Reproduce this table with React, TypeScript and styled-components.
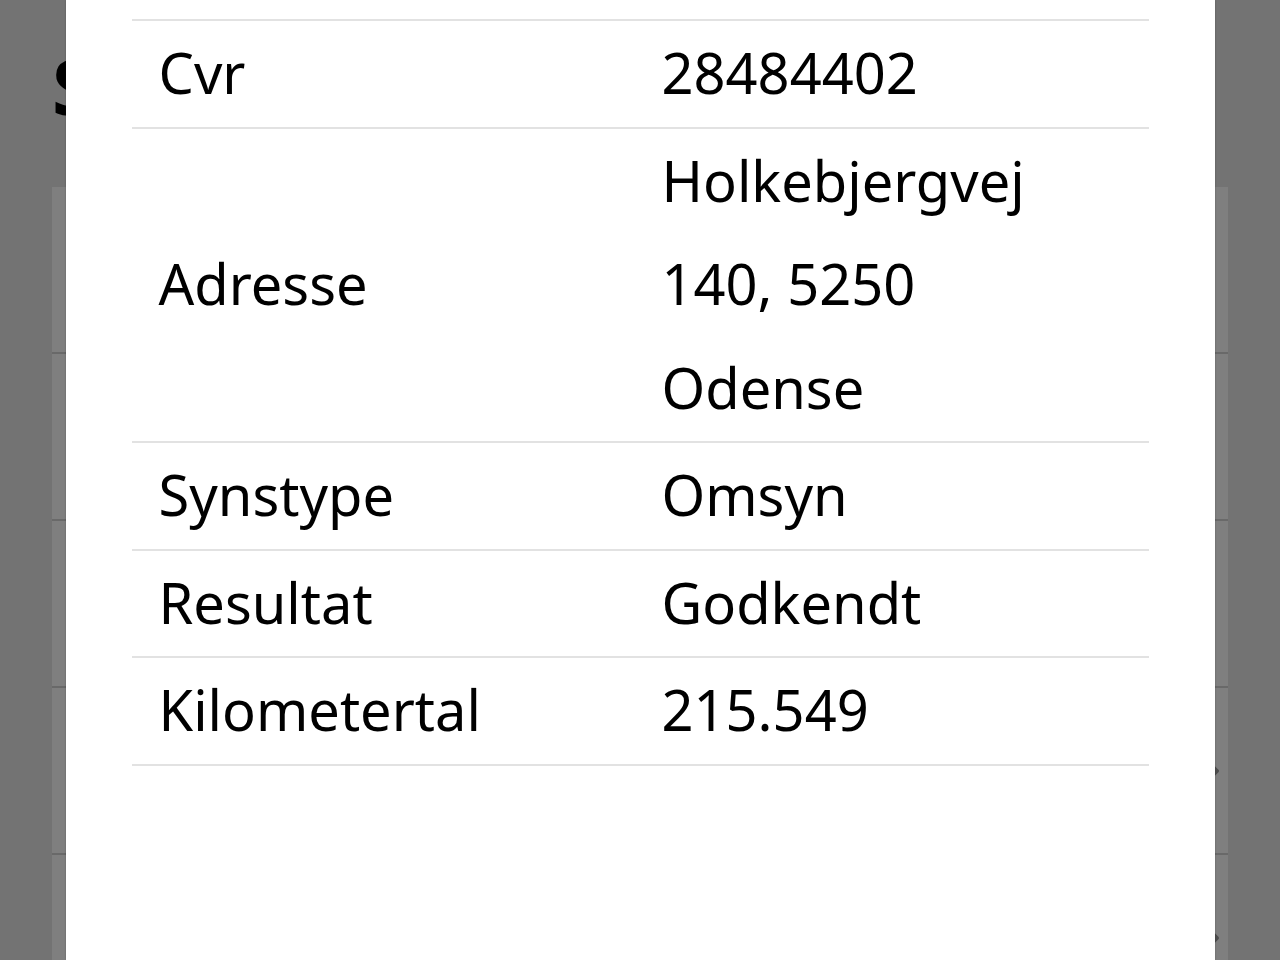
import React from 'react';
import styled, { createGlobalStyle } from 'styled-components';

type Detail = { label: string; value: string };

const details: Array<Detail> = [
  { label: 'Cvr', value: '28484402' },
  { label: 'Adresse', value: 'Holkebjergvej 140, 5250 Odense' },
  { label: 'Synstype', value: 'Omsyn' },
  { label: 'Resultat', value: 'Godkendt' },
  { label: 'Kilometertal', value: '215.549' },
];

const GlobalStyle = createGlobalStyle`
  html, body {
    margin: 0;
    height: 100%;
    overflow: hidden;
  }
  body {
    background: #e6e6e6;
    font-family: 'Noto Sans', 'Open Sans', sans-serif;
    color: #000;
  }
`;

export default function App() {
  return (
    <>
      <GlobalStyle />
      <Page>
        <Header>
          <Title>Syn</Title>
        </Header>
        <List>
          {[0, 1, 2, 3, 4].map((i) => (
            <ListItem key={i}>
              {i > 2 && (
                <Chevron viewBox="0 0 24 24">
                  <path d="M9 5l7 7-7 7" />
                </Chevron>
              )}
            </ListItem>
          ))}
        </List>
      </Page>
      <Overlay>
        <Modal>
          <Table>
            {details.map((d) => (
              <Row key={d.label}>
                <Label>{d.label}</Label>
                <Value>{d.value}</Value>
              </Row>
            ))}
          </Table>
        </Modal>
      </Overlay>
    </>
  );
}

const Page = styled('div')`
  padding: 0 52px;
`;

const Header = styled('header')`
  height: 187px;
  box-sizing: border-box;
  padding-top: 42px;
`;

const Title = styled('h1')`
  margin: 0;
  font-size: 77px;
  font-weight: 700;
  line-height: 88px;
`;

const List = styled('div')`
  background: #fff;
  display: flex;
  flex-direction: column;
`;

const ListItem = styled('div')`
  height: 165px;
  border-bottom: 2px solid #d2d2d2;
  display: flex;
  align-items: center;
  justify-content: flex-end;
  padding-right: 2px;
`;

const Chevron = styled('svg')`
  width: 26px;
  height: 26px;
  fill: none;
  stroke: #999;
  stroke-width: 3;
  stroke-linecap: round;
  stroke-linejoin: round;
`;

const Overlay = styled('div')`
  position: fixed;
  inset: 0;
  background: rgba(0, 0, 0, 0.5);
  display: flex;
  justify-content: center;
`;

const Modal = styled('div')`
  width: 1149px;
  height: 100%;
  box-sizing: border-box;
  background: #fff;
  padding: 19px 66px 0;
  box-shadow: 0 0 2px rgba(0, 0, 0, 0.25);
`;

const Table = styled('div')`
  border-top: 2px solid #e2e2e2;
`;

const Row = styled('div')`
  display: grid;
  grid-template-columns: 503px 1fr;
  border-bottom: 2px solid #e2e2e2;
  padding: 0 0 2px;
  font-size: 56px;
  line-height: 103.5px;
`;

const Label = styled('div')`
  align-self: center;
  padding-left: 27px;
`;

const Value = styled('div')`
  padding-left: 27px;
  max-width: 420px;
`;
